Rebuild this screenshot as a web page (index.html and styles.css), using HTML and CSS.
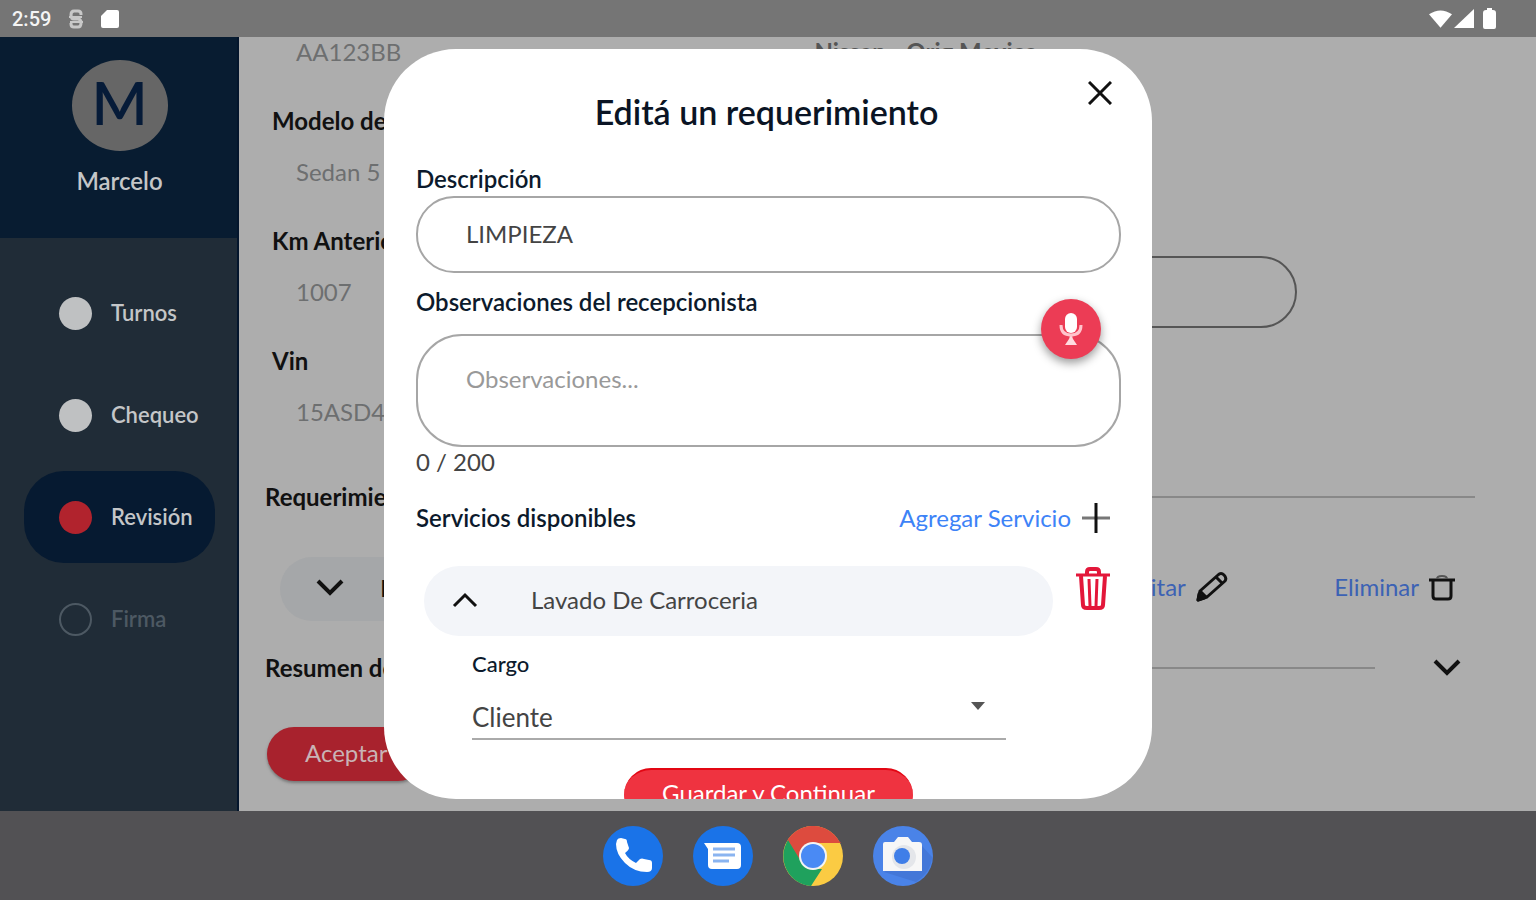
FILE: index.html
```html
<!DOCTYPE html>
<html lang="es">
<head>
<meta charset="utf-8">
<meta name="viewport" content="width=device-width, initial-scale=1">
<title>Editá un requerimiento</title>
<link rel="stylesheet" href="styles.css">
</head>
<body>
<div class="screen">
  <header class="status">
    <span class="status-time">2:59</span>
    <svg class="status-debug" viewBox="0 0 16 20" width="16" height="20" fill="none" stroke="#c8c8c8" stroke-width="3"><path d="M13 6V5q0-3-3-3H6Q3 2 3 6t3 4h4q3 0 3 4t-3 4H6q-3 0-3-3v-1"/><path d="M1 8h13M2 13h13" stroke-width="2"/></svg>
    <svg viewBox="0 0 18 20" width="18" height="20"><path d="M6 1h10q2 0 2 2v14q0 2-2 2H2q-2 0-2-2V7z" fill="#fff"/></svg>
    <span class="status-right">
      <svg viewBox="0 0 24 20" width="23" height="20"><path d="M12 19 0 5Q12-3 24 5z" fill="#fff"/></svg>
      <svg viewBox="0 0 20 20" width="20" height="20"><path d="M20 0v19H0z" fill="#fff"/></svg>
      <svg class="battery" viewBox="0 0 13 21" width="13" height="21"><path d="M4 0h5v2h1q3 0 3 3v14q0 2-2 2H2q-2 0-2-2V5q0-3 3-3h1z" fill="#fff"/></svg>
    </span>
  </header>

  <div class="app">
    <aside class="sidebar">
      <div class="profile">
        <div class="avatar">M</div>
        <div class="profile-name">Marcelo</div>
      </div>
      <nav class="steps">
        <a class="step" href="#turnos"><span class="dot"></span>Turnos</a>
        <a class="step" href="#chequeo"><span class="dot"></span>Chequeo</a>
        <a class="step step-active" href="#revision"><span class="dot"></span>Revisión</a>
        <a class="step step-pending" href="#firma"><span class="dot"></span>Firma</a>
      </nav>
    </aside>

    <main class="content">
      <div class="fields">
        <div class="field"><span class="field-value">AA123BB</span></div>
        <div class="field"><span class="field-value field-dark">Nissan - Orig Mexico</span></div>
        <div class="field"><span class="field-label">Modelo de auto</span><span class="field-value">Sedan 5</span></div>
        <div class="field"></div>
        <div class="field"><span class="field-label">Km Anterior</span><span class="field-value">1007</span></div>
        <div class="field"><input class="field-input" type="text" aria-label="Km actual"></div>
        <div class="field"><span class="field-label">Vin</span><span class="field-value">15ASD4</span></div>
      </div>
      <div class="section"><h2 class="section-title">Requerimientos</h2><span class="rule"></span></div>
      <div class="request">
        <button class="request-pill" type="button">
          <svg viewBox="0 0 28 20" width="28" height="20" fill="none" stroke="#111" stroke-width="4"><path d="m2 3 12 12L26 3"/></svg>
          LIMPIEZA
        </button>
        <a class="action" href="#editar">Editar
          <svg viewBox="0 0 32 32" width="32" height="32" fill="none" stroke="#111" stroke-width="3" stroke-linejoin="round"><path d="m2 29 2-9L22 4q3-3 6 0t1 6L11 26z"/><path d="m20 6 6 6M4 20l6 6"/><path d="m2 29 1-6 5 4z" fill="#111"/></svg>
        </a>
        <a class="action" href="#eliminar">Eliminar
          <svg viewBox="0 0 26 28" width="26" height="28" fill="none" stroke="#111" stroke-width="3"><path d="M0 7h26M4 8v15q0 3 3 3h12q3 0 3-3V8"/><path d="M8 6q0-3 5-3t5 3" stroke="#555" stroke-width="2"/></svg>
        </a>
      </div>
      <div class="section section-summary"><h2 class="section-title">Resumen de servicios</h2><span class="rule"></span>
        <button class="icon-button" type="button" aria-label="Desplegar resumen"><svg viewBox="0 0 28 20" width="28" height="20" fill="none" stroke="#111" stroke-width="4"><path d="m2 3 12 12L26 3"/></svg></button>
      </div>
      <button class="accept" type="button">Aceptar</button>
    </main>

    <div class="overlay">
      <form class="modal" role="dialog" aria-labelledby="modal-title">
        <button class="close" type="button" aria-label="Cerrar"><svg viewBox="0 0 24 24" width="24" height="24" stroke="#111" stroke-width="3"><path d="m1 1 22 22M23 1 1 23"/></svg></button>
        <h1 class="modal-title" id="modal-title">Editá un requerimiento</h1>
        <label class="label" for="desc">Descripción</label>
        <input class="text-input" id="desc" type="text" value="LIMPIEZA">
        <label class="label label-notes" for="notes">Observaciones del recepcionista</label>
        <div class="notes-box">
          <textarea class="notes" id="notes" placeholder="Observaciones..."></textarea>
          <button class="mic" type="button" aria-label="Dictar"><svg viewBox="0 0 24 34" width="24" height="34" fill="none" stroke="#ffc4cc" stroke-width="3"><rect x="6" y="1" width="12" height="20" rx="6" fill="#fff" stroke="none"/><path d="M2 13q0 10 10 10t10-10M12 23v6"/><path d="m12 24 6 9H6z" fill="#ffdbe0" stroke="none"/></svg></button>
        </div>
        <div class="counter">0 / 200</div>
        <div class="services-head">
          <span class="label">Servicios disponibles</span>
          <a class="add" href="#agregar">Agregar Servicio
            <svg viewBox="0 0 30 30" width="30" height="30" stroke-width="3"><path d="M1 15h28" stroke="#777"/><path d="M15 0v30" stroke="#111"/></svg>
          </a>
        </div>
        <div class="service">
          <button class="service-pill" type="button">
            <svg viewBox="0 0 26 18" width="26" height="18" fill="none" stroke="#111" stroke-width="3"><path d="M2 15 13 4l11 11"/></svg>
            Lavado De Carroceria
          </button>
          <button class="icon-button trash" type="button" aria-label="Eliminar servicio"><svg viewBox="0 0 34 44" width="34" height="44" fill="none" stroke="#e3173a" stroke-width="4"><path d="M0 8h34" stroke-width="3"/><path d="m5 9 2 29q0 3 4 3h12q4 0 4-3l2-29"/><path d="M11 9V5q0-3 3-3h6q3 0 3 3v4"/><path d="m13 12 1 27M21 12l-1 27" stroke-width="3"/></svg></button>
        </div>
        <div class="charge">
          <label class="charge-label" for="cargo">Cargo</label>
          <div class="select-box">
            <select class="select" id="cargo"><option>Cliente</option></select>
            <svg class="caret" viewBox="0 0 14 8" width="14" height="8"><path d="M0 0h14L7 8z" fill="#555"/></svg>
          </div>
        </div>
        <button class="save" type="submit">Guardar y Continuar</button>
      </form>
    </div>
  </div>

  <footer class="dock">
    <svg viewBox="0 0 60 60" width="60" height="60"><circle cx="30" cy="30" r="30" fill="#1a73e8"/><path d="M14 14q1-2 4-2l4 1q2 0 2 3l2 6q0 2-4 5 3 6 11 10l4-4q2-1 4 0l5 1q3 0 3 3v5q0 4-5 4Q31 46 22 37T13 18z" fill="#fff"/></svg>
    <svg viewBox="0 0 60 60" width="60" height="60"><circle cx="30" cy="30" r="30" fill="#1a73e8"/><path d="M11 17h33q4 0 4 4v18q0 4-4 4H19q-4 0-4-4V23z" fill="#fff"/><path d="M20 23h22M20 29h22M20 35h16" stroke="#8ab4f0" stroke-width="3"/></svg>
    <svg viewBox="0 0 60 60" width="60" height="60"><circle cx="30" cy="30" r="30" fill="#fbcb43"/><path d="M4 15A30 30 0 0 1 56 15L58 17H30L19 37z" fill="#dd4b3e"/><path d="M5 14 19 37 30 43h9L28 60A30 30 0 0 1 5 14z" fill="#1fa15d"/><circle cx="30" cy="30" r="14" fill="#f4f4f4"/><circle cx="30" cy="30" r="12" fill="#4a8af4"/></svg>
    <svg viewBox="0 0 60 60" width="60" height="60"><circle cx="30" cy="30" r="30" fill="#4a83e8"/><path d="M49 20 59 31q-1 15-16 25L11 46z" fill="#4377d8"/><path d="M12 16h9l4-5h10l4 5h7q3 0 3 3v26H10V18q0-2 2-2z" fill="#f7f7f7"/><circle cx="31" cy="31" r="12" fill="#e4e6ea"/><circle cx="29" cy="30" r="8" fill="#3f7ee8"/></svg>
  </footer>
</div>
</body>
</html>
```

FILE: styles.css
```css
* { box-sizing: border-box; }

body {
  margin: 0;
  font-family: Lato, "Open Sans", sans-serif;
  font-size: 24px;
  line-height: 30px;
  color: #111;
}

button, input, textarea, select { font: inherit; color: inherit; margin: 0; }
button { border: 0; background: none; padding: 0; cursor: pointer; }
a { text-decoration: none; color: inherit; }
svg { display: block; flex: none; }

.screen { display: flex; flex-direction: column; height: 100vh; overflow: hidden; }

/* Status bar */
.status {
  display: flex;
  align-items: center;
  flex: none;
  gap: 16px;
  height: 37px;
  padding: 0 40px 0 12px;
  background: #757575;
  color: #f4f4f4;
}
.status-time { font: 500 20px/36px Roboto, sans-serif; }
.status-debug { margin: 0 1px; }
.status-right { display: flex; align-items: center; gap: 2px; margin-left: auto; }
.battery { margin-left: 7px; }

.app { position: relative; display: flex; flex: 1; min-height: 0; }

/* Sidebar */
.sidebar { flex: none; width: 239px; background: #202c37; border-right: 2px solid #03152c; color: #c4c6c8; }
.profile {
  display: flex;
  flex-direction: column;
  align-items: center;
  gap: 15px;
  height: 201px;
  padding: 23px 0 0 2px;
  background: #081c31;
}
.avatar {
  width: 96px;
  height: 91px;
  border-radius: 50%;
  background: #666;
  color: #061b38;
  font-size: 60px;
  font-weight: 600;
  line-height: 84px;
  text-align: center;
}
.profile-name { font-weight: 600; }
.steps { display: flex; flex-direction: column; gap: 10px; padding: 29px 22px 29px 24px; }
.step {
  display: flex;
  align-items: center;
  gap: 19px;
  height: 92px;
  padding-left: 35px;
  border-radius: 40px;
  font-size: 22px;
  font-weight: 600;
}
.dot { width: 33px; height: 33px; border-radius: 50%; background: #bfc1c2; }
.step-active { background: #061a31; }
.step-active .dot { background: #b1232d; }
.step-pending { color: #4d5963; }
.step-pending .dot { background: none; border: 2px solid #4d5963; }

/* Vehicle sheet, scrolled to its end */
.content {
  display: flex;
  flex: 1;
  flex-direction: column;
  justify-content: flex-end;
  overflow: hidden;
  min-width: 0;
  padding: 0 61px 30px 26px;
  background: #adadad;
}
.content > * { flex: none; }
.fields { display: grid; grid-template-columns: 1fr 1fr; gap: 16px 12px; padding: 0 178px 0 7px; }
.field { display: flex; flex-direction: column; justify-content: flex-end; height: 104px; }
.field-label { font-weight: 700; }
.field-value { padding: 21px 24px; color: #6d6f70; }
.field-dark { color: #555; font-weight: 700; }
.field-input { height: 72px; border: 2px solid #555; border-radius: 36px; background: none; padding: 0 24px; }
.section { display: flex; align-items: center; gap: 24px; margin-top: 34px; }
.section-title { margin: 0; font-size: 24px; font-weight: 700; }
.rule { flex: 1; height: 2px; background: #888; }
.section-summary { gap: 58px; padding-right: 14px; margin-top: 32px; }
.request { display: flex; align-items: center; margin: 45px 20px 0 15px; }
.request-pill {
  display: flex;
  align-items: center;
  gap: 36px;
  flex: 1;
  max-width: 808px;
  height: 64px;
  padding: 0 0 3px 36px;
  border-radius: 32px;
  background: #a5a7a9;
}
.action { display: flex; align-items: center; gap: 10px; margin-left: auto; padding-bottom: 4px; color: #3c62b4; }
.request-pill + .action { margin-left: 36px; }
.icon-button { flex: none; }
.accept {
  align-self: flex-start;
  height: 54px;
  margin: 44px 0 0 2px;
  padding: 0 38px 3px;
  border-radius: 27px;
  background: #a8222d;
  color: #c9b3b5;
  box-shadow: 0 2px 3px #777;
}

/* Dialog */
.overlay { position: absolute; inset: 0; display: flex; justify-content: center; padding: 12px 0; }
.modal {
  position: relative;
  display: flex;
  flex-direction: column;
  width: 50%;
  padding: 43px 31px 0 32px;
  border-radius: 72px;
  background: #fff;
  overflow: hidden;
}
.modal > * { flex: none; }
.close { position: absolute; top: 32px; right: 40px; }
.modal-title { margin: 0 0 32px; padding-right: 4px; font-size: 34px; line-height: 40px; font-weight: 600; text-align: center; color: #0a1424; }
.label { font-weight: 600; color: #0c1a2c; }
.text-input { height: 77px; border: 2px solid #a6a6a6; border-radius: 38px; background: none; padding: 0 48px 2px; color: #444; outline: 0; margin-top: 2px; }
.label-notes { margin-top: 14px; }
.notes-box { position: relative; display: flex; margin-top: 17px; }
.notes {
  flex: 1;
  height: 113px;
  border: 2px solid #a6a6a6;
  border-radius: 46px;
  background: none;
  padding: 28px 48px;
  resize: none;
  outline: 0;
  overflow: hidden;
}
.notes::placeholder { color: #999; opacity: 1; }
.mic {
  position: absolute;
  top: -35px;
  right: 20px;
  display: grid;
  place-items: center;
  width: 60px;
  height: 60px;
  border-radius: 50%;
  background: #ec3c55;
  box-shadow: 0 4px 10px #0006;
}
.counter { color: #444; }
.services-head { display: flex; align-items: center; justify-content: space-between; margin-top: 26px; padding-right: 10px; }
.add { display: flex; align-items: center; gap: 10px; color: #3d83f7; }
.service { display: flex; align-items: flex-start; gap: 23px; margin-top: 33px; padding: 0 11px 0 8px; }
.service-pill {
  display: flex;
  align-items: center;
  gap: 53px;
  flex: 1;
  height: 70px;
  padding: 0 0 2px 28px;
  border-radius: 35px;
  background: #f3f5f9;
  color: #444;
}
.trash { margin-top: 1px; }
.charge { display: flex; flex-direction: column; margin: 13px 115px 0 56px; }
.charge-label { font-size: 22px; font-weight: 500; color: #0c1a2c; }
.select-box { position: relative; display: flex; margin-top: 16px; border-bottom: 2px solid #aaa; }
.select { flex: 1; height: 43px; border: 0; padding: 0; background: none; appearance: none; outline: 0; font-size: 26px; color: #444; }
.caret { position: absolute; top: 7px; right: 21px; pointer-events: none; }
.save {
  align-self: center;
  height: 54px;
  margin-top: 28px;
  padding: 0 38px 6px;
  border-radius: 27px;
  background: #ef3340;
  border-top: 2px solid #e30613;
  color: #fff;
}

/* Dock */
.dock { display: flex; flex: none; align-items: center; justify-content: center; gap: 30px; height: 89px; background: #525154; }
```
